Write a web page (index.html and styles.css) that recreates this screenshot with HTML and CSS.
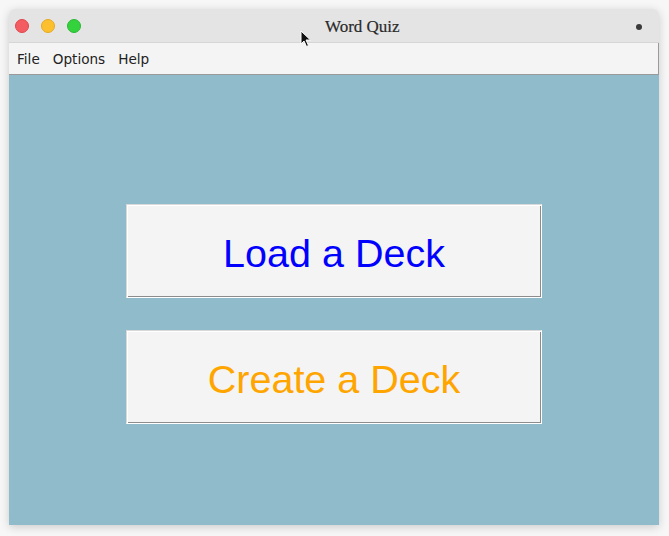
FILE: index.html
```html
<!DOCTYPE html>
<html>
<head>
<meta charset="utf-8">
<link rel="stylesheet" href="styles.css">
</head>
<body>
<div class="window">
  <div class="titlebar">
    <span class="light red"></span>
    <span class="light yellow"></span>
    <span class="light green"></span>
    <span class="title">Word Quiz</span>
    <span class="spacer"></span>
    <span class="dot"></span>
  </div>
  <div class="menubar">
    <span class="menu-item">File</span>
    <span class="menu-item">Options</span>
    <span class="menu-item">Help</span>
  </div>
  <div class="content">
    <div class="deck-btn load">Load a Deck</div>
    <div class="deck-btn create">Create a Deck</div>
  </div>
</div>
<svg class="cursor" width="12" height="18" viewBox="0 0 12 18">
  <path d="M1 1 L1 14 L4 11 L6.5 16.5 L8.5 15.5 L6 10 L10.5 10 Z" fill="#111" stroke="#fff" stroke-width="1"/>
</svg>
</body>
</html>
```
FILE: styles.css
```css
html, body {
  margin: 0;
  padding: 0;
}
body {
  background: #f7f7f7;
  width: 669px;
  height: 536px;
  padding: 9px 0 0 9px;
  box-sizing: border-box;
  position: relative;
  overflow: hidden;
}
.window {
  width: 650px;
  height: 516px;
  display: flex;
  flex-direction: column;
  box-shadow: 0 2px 10px rgba(0,0,0,0.18);
  border-radius: 6px 6px 0 0;
}
.titlebar {
  height: 34px;
  box-sizing: border-box;
  background: #e4e4e4;
  border-radius: 6px 6px 0 0;
  border-bottom: 1px solid #d6d6d6;
  display: flex;
  align-items: center;
  padding: 0 17px 0 6px;
}
.light {
  width: 14px;
  height: 14px;
  border-radius: 50%;
  box-sizing: border-box;
  margin-right: 12px;
}
.light.red { background: #f35c60; border: 1px solid #e0464c; }
.light.yellow { background: #fcc02f; border: 1px solid #e5a91f; }
.light.green { background: #34d23c; border: 1px solid #2bb832; margin-right: 0; }
.title {
  margin-left: 244px;
  font-family: "Liberation Serif", serif;
  font-size: 17px;
  color: #2a2a2a;
  -webkit-text-stroke: 0.2px #2a2a2a;
  position: relative;
  top: 1px;
}
.spacer { flex: 1; }
.dot {
  width: 6px;
  height: 6px;
  border-radius: 50%;
  background: #3a3a3a;
  position: relative;
  top: 1px;
}
.menubar {
  height: 32px;
  box-sizing: border-box;
  background: #f4f4f4;
  border-bottom: 1px solid #9a9a9a;
  border-right: 1px solid #9a9a9a;
  display: flex;
  align-items: center;
  padding: 0 0 0 8px;
  font-family: "DejaVu Sans", sans-serif;
  font-size: 13.6px;
  color: #222;
}
.menu-item {
  margin-right: 13px;
  position: relative;
  top: 0;
}
.content {
  flex: 1;
  background: #8fbbcb;
  display: flex;
  flex-direction: column;
  align-items: center;
  padding-top: 129px;
  gap: 32px;
}
.deck-btn {
  width: 416px;
  height: 94px;
  box-sizing: border-box;
  background: #f4f4f4;
  border: 1px solid;
  border-color: #d9d9d9 #ffffff #ffffff #d9d9d9;
  box-shadow: inset 1px 1px 0 #ffffff, inset -1px -1px 0 #8c8c8c;
  display: flex;
  align-items: center;
  justify-content: center;
  padding-top: 5px;
  font-family: "Liberation Sans", Arial, sans-serif;
  font-size: 39.5px;
}
.load { color: #0000ff; }
.create { color: #ffa500; }
.cursor {
  position: absolute;
  left: 300px;
  top: 30px;
}
```
